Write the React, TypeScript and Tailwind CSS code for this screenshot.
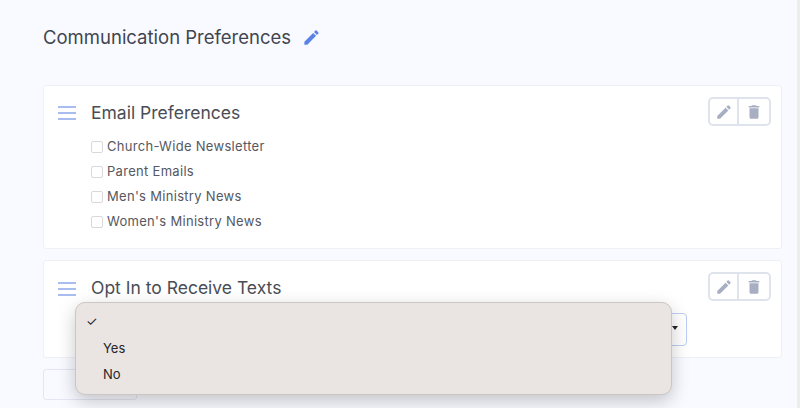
import React from 'react'

const PencilIcon = ({ className }: { className: string }) => (
  <svg viewBox="0 0 24 24" className={className} fill="currentColor">
    <path d="M3 17.25V21h3.75L17.81 9.94l-3.75-3.75L3 17.25zM20.71 7.04a1 1 0 0 0 0-1.41l-2.34-2.34a1 1 0 0 0-1.41 0l-1.83 1.83 3.75 3.75 1.83-1.83z" />
  </svg>
)

const TrashIcon = ({ className }: { className: string }) => (
  <svg viewBox="0 0 24 24" className={className} fill="currentColor">
    <path d="M6 19c0 1.1.9 2 2 2h8c1.1 0 2-.9 2-2V7H6v12zM19 4h-3.5l-1-1h-5l-1 1H5v2h14V4z" />
  </svg>
)

const DragHandle = () => (
  <div className="flex flex-col gap-[4px] w-[18px] mt-[2px]">
    <div className="h-[2px] bg-[#a9bcf0]" />
    <div className="h-[2px] bg-[#a9bcf0]" />
    <div className="h-[2px] bg-[#a9bcf0]" />
  </div>
)

const CardActions = () => (
  <div className="flex h-[29px] w-[63px] rounded-[5px] border-2 border-[#dfe3ec] bg-white">
    <div className="flex flex-1 items-center justify-center border-r-2 border-[#dfe3ec]">
      <PencilIcon className="w-[18px] h-[18px] text-[#a8afc2]" />
    </div>
    <div className="flex w-[30px] items-center justify-center">
      <TrashIcon className="w-[18px] h-[18px] text-[#a8afc2]" />
    </div>
  </div>
)

const emailOptions = ['Church-Wide Newsletter', 'Parent Emails', "Men's Ministry News", "Women's Ministry News"]

export default function App() {
  return (
    <div className="relative h-[408px] w-[800px] overflow-hidden bg-[#f9faff] font-['Inter',sans-serif]">
      <div className="pl-[43px] pr-[18px] pt-[25px]">
        <div className="flex items-center gap-[11px] h-[24px]">
          <h1 className="text-[18.5px] leading-[24px] text-[#41454f]">Communication Preferences</h1>
          <PencilIcon className="w-[19px] h-[19px] text-[#5b82e6]" />
        </div>

        <div className="mt-[36px] h-[164px] rounded-[3px] border border-[#eef0f5] bg-white pl-[14px] pr-[10px] pt-[14px]">
          <div className="flex items-start">
            <div className="pt-[4px]">
              <DragHandle />
            </div>
            <div className="ml-[15px] flex-1 pt-[1px]">
              <h2 className="text-[17.5px] leading-[24px] text-[#4a4d55]">Email Preferences</h2>
              <ul className="mt-[12px] flex flex-col gap-[5px]">
                {emailOptions.map((option) => (
                  <li key={option} className="flex h-[20px] items-center gap-[4px]">
                    <span className="h-[12px] w-[12px] rounded-[2px] border border-[#d9d9dc] bg-white" />
                    <span className="text-[13px] tracking-[0.3px] text-[#55585f]">{option}</span>
                  </li>
                ))}
              </ul>
            </div>
            <div className="-mt-[3px]">
              <CardActions />
            </div>
          </div>
        </div>

        <div className="mt-[11px] h-[98px] rounded-[3px] border border-[#eef0f5] bg-white pl-[14px] pr-[10px] pt-[14px]">
          <div className="flex items-start">
            <div className="pt-[5px]">
              <DragHandle />
            </div>
            <div className="ml-[15px] flex-1 pt-[1px]">
              <h2 className="text-[17.5px] leading-[24px] text-[#4a4d55]">Opt In to Receive Texts</h2>
              <div className="mt-[13px] h-[33px] w-[596px] rounded-[4px] border border-[#bccdf5] bg-white" />
            </div>
            <div className="-mt-[3px]">
              <CardActions />
            </div>
          </div>
        </div>

        <button className="mt-[11px] h-[31px] w-[94px] rounded-[3px] border border-[#e3e6f3] bg-[#f9faff] text-[12px] text-[#8a8e9a]">
          New
        </button>
      </div>

      {/* native select popup, sits over the card */}
      <div className="absolute left-[75px] top-[302px] h-[93px] w-[597px] rounded-[10px] border border-[#c9c6c3] bg-[#eae5e2] shadow-[0_6px_18px_rgba(0,0,0,0.22)] text-[13px] text-[#26262a]">
        <div className="relative h-[26px] mt-[6px]">
          <span className="absolute left-[10px] top-[3px] text-[13px]">✓</span>
        </div>
        <div className="h-[26px] pl-[27px] leading-[26px]">Yes</div>
        <div className="h-[26px] pl-[27px] leading-[26px]">No</div>
      </div>

      {/* select arrow peeking out next to the popup */}
      <div className="absolute left-[672px] top-[326px] h-0 w-0 border-x-[3px] border-t-[4px] border-x-transparent border-t-[#222]" />

      <div className="absolute right-0 top-0 h-full w-[3px] bg-[#eceded]" />
    </div>
  )
}
